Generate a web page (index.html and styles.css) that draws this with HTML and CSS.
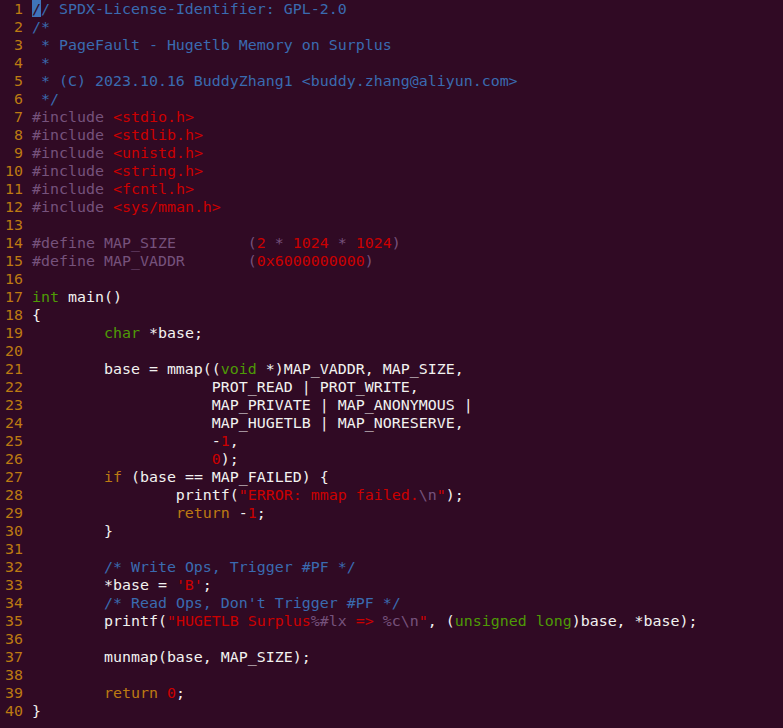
FILE: index.html
```html
<!DOCTYPE html>
<html>
<head>
<meta charset="utf-8">
<link rel="stylesheet" href="styles.css">
</head>
<body>
<div class="editor">
<div class="line"><span class="ln"> 1 </span><span class="cm"><span class="cursor">/</span>/ SPDX-License-Identifier: GPL-2.0</span></div>
<div class="line"><span class="ln"> 2 </span><span class="cm">/*</span></div>
<div class="line"><span class="ln"> 3 </span><span class="cm"> * PageFault - Hugetlb Memory on Surplus</span></div>
<div class="line"><span class="ln"> 4 </span><span class="cm"> *</span></div>
<div class="line"><span class="ln"> 5 </span><span class="cm"> * (C) 2023.10.16 BuddyZhang1 &lt;buddy.zhang@aliyun.com&gt;</span></div>
<div class="line"><span class="ln"> 6 </span><span class="cm"> */</span></div>
<div class="line"><span class="ln"> 7 </span><span class="pp">#include </span><span class="str">&lt;stdio.h&gt;</span></div>
<div class="line"><span class="ln"> 8 </span><span class="pp">#include </span><span class="str">&lt;stdlib.h&gt;</span></div>
<div class="line"><span class="ln"> 9 </span><span class="pp">#include </span><span class="str">&lt;unistd.h&gt;</span></div>
<div class="line"><span class="ln">10 </span><span class="pp">#include </span><span class="str">&lt;string.h&gt;</span></div>
<div class="line"><span class="ln">11 </span><span class="pp">#include </span><span class="str">&lt;fcntl.h&gt;</span></div>
<div class="line"><span class="ln">12 </span><span class="pp">#include </span><span class="str">&lt;sys/mman.h&gt;</span></div>
<div class="line"><span class="ln">13 </span></div>
<div class="line"><span class="ln">14 </span><span class="pp">#define MAP_SIZE        (</span><span class="str">2</span><span class="pp"> * </span><span class="str">1024</span><span class="pp"> * </span><span class="str">1024</span><span class="pp">)</span></div>
<div class="line"><span class="ln">15 </span><span class="pp">#define MAP_VADDR       (</span><span class="str">0x6000000000</span><span class="pp">)</span></div>
<div class="line"><span class="ln">16 </span></div>
<div class="line"><span class="ln">17 </span><span class="ty">int</span> main()</div>
<div class="line"><span class="ln">18 </span>{</div>
<div class="line"><span class="ln">19 </span>        <span class="ty">char</span> *base;</div>
<div class="line"><span class="ln">20 </span></div>
<div class="line"><span class="ln">21 </span>        base = mmap((<span class="ty">void</span> *)MAP_VADDR, MAP_SIZE,</div>
<div class="line"><span class="ln">22 </span>                    PROT_READ | PROT_WRITE,</div>
<div class="line"><span class="ln">23 </span>                    MAP_PRIVATE | MAP_ANONYMOUS |</div>
<div class="line"><span class="ln">24 </span>                    MAP_HUGETLB | MAP_NORESERVE,</div>
<div class="line"><span class="ln">25 </span>                    -<span class="str">1</span>,</div>
<div class="line"><span class="ln">26 </span>                    <span class="str">0</span>);</div>
<div class="line"><span class="ln">27 </span>        <span class="kw">if</span> (base == MAP_FAILED) {</div>
<div class="line"><span class="ln">28 </span>                printf(<span class="str">"ERROR: mmap failed.</span><span class="pp">\n</span><span class="str">"</span>);</div>
<div class="line"><span class="ln">29 </span>                <span class="kw">return</span> -<span class="str">1</span>;</div>
<div class="line"><span class="ln">30 </span>        }</div>
<div class="line"><span class="ln">31 </span></div>
<div class="line"><span class="ln">32 </span>        <span class="cm">/* Write Ops, Trigger #PF */</span></div>
<div class="line"><span class="ln">33 </span>        *base = <span class="str">'B'</span>;</div>
<div class="line"><span class="ln">34 </span>        <span class="cm">/* Read Ops, Don't Trigger #PF */</span></div>
<div class="line"><span class="ln">35 </span>        printf(<span class="str">"HUGETLB Surplus</span><span class="pp">%#lx</span><span class="str"> =&gt; </span><span class="pp">%c\n</span><span class="str">"</span>, (<span class="ty">unsigned</span> <span class="ty">long</span>)base, *base);</div>
<div class="line"><span class="ln">36 </span></div>
<div class="line"><span class="ln">37 </span>        munmap(base, MAP_SIZE);</div>
<div class="line"><span class="ln">38 </span></div>
<div class="line"><span class="ln">39 </span>        <span class="kw">return</span> <span class="str">0</span>;</div>
<div class="line"><span class="ln">40 </span>}</div>
</div>
</body>
</html>
```
FILE: styles.css
```css
html, body {
  margin: 0;
  padding: 0;
  background: #300a24;
}
body {
  width: 783px;
  height: 728px;
  overflow: hidden;
}
.editor {
  padding: 0 0 0 5px;
  font-family: "DejaVu Sans Mono", "Liberation Mono", monospace;
  font-size: 14.95px;
  color: #f2f2f0;
}
.line {
  height: 18px;
  line-height: 18px;
  white-space: pre;
}
.ln { color: #bd7a12; }
.kw { color: #bd7a12; }
.cm { color: #3a6bb0; }
.pp { color: #76527c; }
.str { color: #cc0000; }
.ty { color: #4e9a06; }
.cursor {
  display: inline-block;
  height: 17px;
  line-height: 18px;
  vertical-align: top;
  background: #3f74ba;
  color: #300a24;
}
```
